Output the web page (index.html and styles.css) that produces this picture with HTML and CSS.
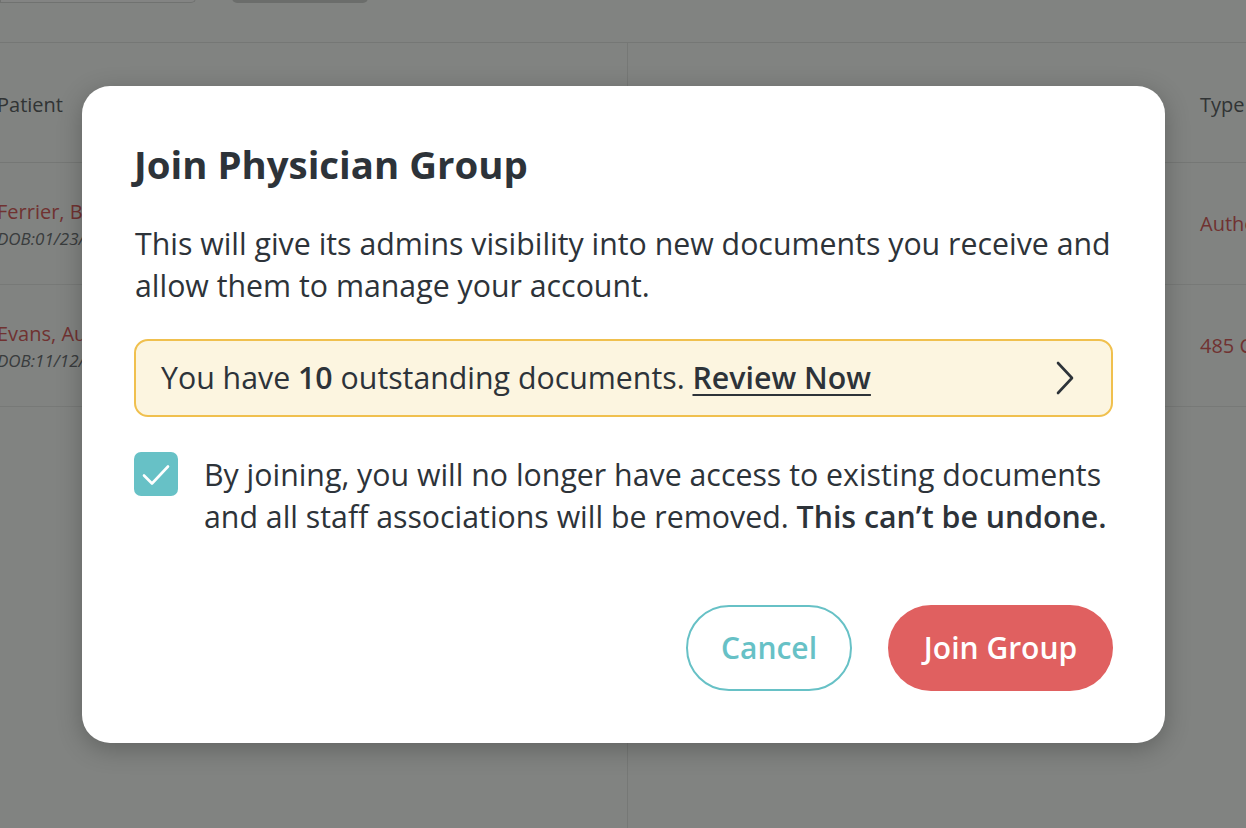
FILE: index.html
```html
<!DOCTYPE html>
<html>
<head>
<meta charset="utf-8">
<link rel="stylesheet" href="styles.css">
</head>
<body>
<div class="page">
  <div class="topbar">
    <div class="search"></div>
    <div class="topbtn"></div>
  </div>
  <div class="tables">
    <div class="col left">
      <div class="thead"><span class="th">Patient</span></div>
      <div class="row">
        <div class="name">Ferrier, Bernard</div>
        <div class="dob">DOB:01/23/1961</div>
      </div>
      <div class="row">
        <div class="name">Evans, Audrey</div>
        <div class="dob">DOB:11/12/1974</div>
      </div>
    </div>
    <div class="col right">
      <div class="thead"><span class="th">Type</span></div>
      <div class="row"><div class="name">Authorization</div></div>
      <div class="row"><div class="name">485 Certification</div></div>
    </div>
  </div>
</div>
<div class="overlay">
  <div class="modal">
    <h1 class="title">Join Physician Group</h1>
    <p class="desc">This will give its admins visibility into new documents you receive and allow them to manage your account.</p>
    <div class="alert">
      <span class="alert-text">You have <b>10</b> outstanding documents. <a class="review">Review Now</a></span>
      <svg class="chev" width="20" height="34" viewBox="0 0 20 34"><path d="M3 2 L17 17 L3 32" fill="none" stroke="#2d3339" stroke-width="2.6" stroke-linecap="round" stroke-linejoin="round"/></svg>
    </div>
    <div class="check-row">
      <span class="checkbox"><svg width="28" height="22" viewBox="0 0 28 22"><path d="M2 11.5 L10 19.5 L26 2.5" fill="none" stroke="#fff" stroke-width="2.6" stroke-linecap="round" stroke-linejoin="round"/></svg></span>
      <p class="check-text">By joining, you will no longer have access to existing documents and all staff associations will be removed. <b>This can’t be undone.</b></p>
    </div>
    <div class="actions">
      <button class="btn cancel">Cancel</button>
      <button class="btn join">Join Group</button>
    </div>
  </div>
</div>
</body>
</html>
```
FILE: styles.css
```css
* { box-sizing: border-box; }
html, body { margin: 0; padding: 0; }
body {
  width: 1246px;
  height: 828px;
  overflow: hidden;
  font-family: "Open Sans", "Liberation Sans", sans-serif;
  background: #fbfdfb;
  position: relative;
}
.page { width: 1246px; height: 828px; overflow: hidden; }
.topbar {
  height: 43px;
  border-bottom: 1px solid #e2e4e2;
  display: flex;
  align-items: flex-start;
  gap: 36px;
}
.search {
  width: 196px;
  height: 5px;
  margin-top: -2px;
  border: 1px solid #d8dad8;
  border-top: none;
  border-radius: 0 0 12px 0;
  background: #fff;
}
.topbtn {
  width: 136px;
  height: 5px;
  margin-top: -2px;
  border-radius: 0 0 14px 14px;
  background: #cfd1cf;
}
.tables { display: flex; height: 785px; }
.col { height: 100%; overflow: hidden; }
.left { flex: none; width: 628px; border-right: 1px solid #e4e6e4; }
.right { flex: 1; min-width: 0; }
.thead {
  height: 120px;
  border-bottom: 1px solid #e2e4e2;
  display: flex;
  align-items: center;
  padding-top: 4px;
  font-size: 20px;
  color: #5a5e62;
}
.left .thead, .left .row { margin-left: -3px; }
.right .thead, .right .row { padding-left: 572px; }
.row {
  height: 122px;
  border-bottom: 1px solid #e6e8e6;
  display: flex;
  flex-direction: column;
  justify-content: center;
}
.left .row { padding-top: 2px; }
.name { font-size: 20px; color: #d85a5a; white-space: nowrap; line-height: 28px; }
.dob { font-size: 17px; font-style: italic; color: #6a6e72; white-space: nowrap; line-height: 26px; }

.overlay {
  position: absolute;
  inset: 0;
  background: rgba(8, 10, 8, 0.5);
  display: flex;
  align-items: center;
  justify-content: center;
}
.modal {
  width: 1083px;
  height: 657px;
  margin-left: 1px;
  background: #fff;
  border-radius: 28px;
  box-shadow: 0 6px 24px rgba(0,0,0,0.25);
  padding: 47px 52px 52px 52px;
  color: #2d3339;
  display: flex;
  flex-direction: column;
}
.title {
  margin: 0;
  font-size: 38.4px;
  font-weight: 700;
  line-height: 62px;
}
.desc {
  margin: 28px 0 0 1px;
  font-size: 30.3px;
  line-height: 42px;
}
.alert {
  margin-top: 32px;
  height: 78px;
  border: 2px solid #f0c04e;
  background: #fcf5e0;
  border-radius: 14px;
  display: flex;
  align-items: center;
  justify-content: space-between;
  padding: 0 36px 0 25px;
}
.alert-text { font-size: 30.3px; line-height: 40px; }
.alert-text b { font-weight: 600; }
.review { font-weight: 600; text-decoration: underline; text-underline-offset: 5px; text-decoration-thickness: 2px; color: #2d3339; }
.chev { display: block; }
.check-row {
  margin-top: 35px;
  display: flex;
  align-items: flex-start;
  gap: 26px;
}
.checkbox {
  flex: none;
  width: 44px;
  height: 44px;
  border-radius: 7px;
  background: #67c1c6;
  display: flex;
  align-items: center;
  justify-content: center;
  padding-top: 2px;
}
.checkbox svg { display: block; }
.check-text {
  margin: 2px 0 0 0;
  font-size: 30.3px;
  line-height: 42px;
}
.check-text b { font-weight: 600; }
.actions {
  margin-top: auto;
  display: flex;
  justify-content: flex-end;
  gap: 36px;
}
.btn {
  font-family: "Open Sans", "Liberation Sans", sans-serif;
  font-size: 30px;
  font-weight: 600;
  height: 86px;
  border-radius: 43px;
  cursor: pointer;
}
.cancel {
  width: 166px;
  background: #fff;
  border: 2px solid #67c1c6;
  color: #67c1c6;
}
.join {
  width: 225px;
  background: #e06060;
  border: none;
  color: #fff;
}
```
